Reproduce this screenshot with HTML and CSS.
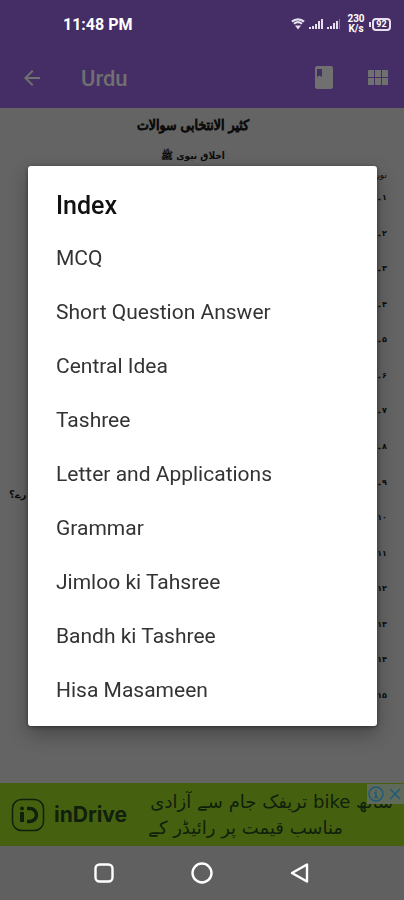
FILE: index.html
```
<!DOCTYPE html>
<html lang="en">
<head>
    <meta charset="UTF-8">
    <meta name="viewport" content="width=device-width, initial-scale=1.0">
    <title>Urdu</title>
    <link rel="stylesheet" href="styles.css">
</head>
<body>
    <div class="screen">
        <div class="status-bar">
            <span class="clock">11:48 PM</span>
            <div class="status-icons">
                <svg width="14" height="12" viewBox="0 0 14 12" fill="none" stroke="#e6e0ee">
                    <path d="M1 3.600C4.400.600 9.600.600 13 3.600" stroke-width="2.400"/>
                    <path d="M3 5.800c2.400-2 5.600-2 8 0" stroke-width="2"/>
                    <path d="M4 7.400h6L7 11.400z" fill="#e6e0ee" stroke="none"/>
                </svg>
                <svg width="32" height="12" viewBox="0 0 32 12" fill="#e6e0ee">
                    <path d="M0 9h2v2H0zM3 8h2v3H3zM6 6h2v5H6zM9 3h2v8H9zM12 1h2v10h-2zM18 9h2v2h-2zM21 8h2v3h-2zM24 5h2v6h-2zM27 3h2v8h-2z"/>
                    <path d="M30 1h1v10h-1z" opacity=".4"/>
                </svg>
                <span class="net-speed">230<br>K/s</span>
                <span class="battery">92</span>
            </div>
        </div>

        <header class="toolbar">
            <button class="icon-button" aria-label="Back">
                <svg width="24" height="24" viewBox="0 0 24 24" fill="currentColor"><path d="M20 11H7.830l5.590-5.590L12 4l-8 8 8 8 1.410-1.410L7.830 13H20z"/></svg>
            </button>
            <h1>Urdu</h1>
            <button class="icon-button" aria-label="Bookmark">
                <svg width="24" height="26" viewBox="0 0 24 26" fill="currentColor"><path fill-rule="evenodd" d="M4 1h14a2 2 0 0 1 2 2v19a2 2 0 0 1-2 2H4a2 2 0 0 1-2-2V3a2 2 0 0 1 2-2zm0 3v8l2.500-1.500L9 12V4z"/></svg>
            </button>
            <button class="icon-button" aria-label="Index">
                <svg width="22" height="18" viewBox="0 0 22 18" fill="currentColor"><path d="M1 1h6v7H1zM8 1h6v7H8zM15 1h6v7h-6zM1 9h6v7H1zM8 9h6v7H8zM15 9h6v7h-6z"/></svg>
            </button>
        </header>

        <main class="document" lang="ur" dir="rtl">
            <h2>کثیر الانتخابی سوالات</h2>
            <h3>اخلاق نبوی ﷺ</h3>
            <p>نور</p>
            <ol class="questions">
                <li>۱۔</li>
                <li>۲۔</li>
                <li>۳۔</li>
                <li>۴۔</li>
                <li>۵۔</li>
                <li>۶۔</li>
                <li>۷۔</li>
                <li>۸۔</li>
                <li>۹۔ <span class="line-end">رے؟</span></li>
                <li>۱۰۔</li>
                <li>۱۱۔</li>
                <li>۱۲۔</li>
                <li>۱۳۔</li>
                <li>۱۴۔</li>
                <li>۱۵۔</li>
            </ol>
        </main>

        <aside class="ad">
            <svg class="ad-logo" width="34" height="34" viewBox="0 0 34 34" fill="none" stroke="currentColor">
                <rect x="1.500" y="1.500" width="31" height="31" rx="9" stroke-width="1.500"/>
                <path d="M11 14v10" stroke-width="4"/>
                <circle cx="11" cy="10.500" r="2" fill="currentColor" stroke="none"/>
                <path d="M16 10.500h3a6.500 6.500 0 0 1 0 13h-3" stroke-width="3.500"/>
            </svg>
            <strong class="ad-name">inDrive</strong>
            <p class="ad-text" lang="ur" dir="rtl">ساتھ bike تریفک جام سے آزادی<br><span class="ad-second">مناسب قیمت پر رائیڈر کے</span></p>
            <div class="ad-choices">
                <button aria-label="Ad information">
                    <svg width="16" height="16" viewBox="0 0 16 16" fill="none" stroke="currentColor" stroke-width="1.500"><circle cx="8" cy="8" r="7"/><path d="M6 7h2v4M6 11.500h4M8 4v1.500"/></svg>
                </button>
                <button aria-label="Close ad">
                    <svg width="16" height="16" viewBox="0 0 16 16" fill="none" stroke="currentColor" stroke-width="1.500"><path d="M3 3l10 10M13 3L3 13"/></svg>
                </button>
            </div>
        </aside>

        <nav class="nav-bar">
            <button aria-label="Recent apps">
                <svg width="22" height="22" viewBox="0 0 22 22" fill="none" stroke="currentColor" stroke-width="2.400"><rect x="2.500" y="2.500" width="17" height="17" rx="4"/></svg>
            </button>
            <button aria-label="Home">
                <svg width="22" height="22" viewBox="0 0 22 22" fill="none" stroke="currentColor" stroke-width="2.400"><circle cx="11" cy="11" r="9.500"/></svg>
            </button>
            <button aria-label="Go back">
                <svg width="22" height="22" viewBox="0 0 22 22" fill="none" stroke="currentColor" stroke-width="2.400" stroke-linejoin="round"><path d="M3 11L18 2.500v17z"/></svg>
            </button>
        </nav>
    </div>

    <div class="overlay">
        <div class="dialog" role="dialog" aria-labelledby="dialogTitle">
            <h2 id="dialogTitle">Index</h2>
            <ul>
                <li><button>MCQ</button></li>
                <li><button>Short Question Answer</button></li>
                <li><button>Central Idea</button></li>
                <li><button>Tashree</button></li>
                <li><button>Letter and Applications</button></li>
                <li><button>Grammar</button></li>
                <li><button>Jimloo ki Tahsree</button></li>
                <li><button>Bandh ki Tashree</button></li>
                <li><button>Hisa Masameen</button></li>
            </ul>
        </div>
    </div>
</body>
</html>
```
FILE: styles.css
```
:root {
    --purple: #452e66;
    --page: #646464;
    --dim-icon: #707070;
    --ad-green: #45610f;
    --ink: #0c0c0c;
}

* {
    box-sizing: border-box;
}

body {
    margin: 0;
    font-family: Roboto, sans-serif;
    background: var(--page);
}

h1, h2, h3, p, ul, ol {
    margin: 0;
    padding: 0;
}

button {
    border: 0;
    padding: 0;
    background: none;
    font: inherit;
    color: inherit;
}

svg {
    display: block;
}

.screen {
    display: flex;
    flex-direction: column;
    min-height: 100vh;
}

.status-bar {
    display: flex;
    align-items: center;
    justify-content: space-between;
    height: 48px;
    padding: 0 13px 0 63px;
    background: var(--purple);
    color: #fff;
}

.clock {
    font-size: 16px;
    font-weight: 700;
}

.status-icons {
    display: flex;
    align-items: center;
    gap: 4px;
}

.net-speed {
    width: 18px;
    margin-left: 2px;
    font-size: 10px;
    font-weight: 700;
    line-height: 10px;
    text-align: center;
}

.battery {
    position: relative;
    width: 19px;
    height: 13px;
    margin-left: 3px;
    border: 2px solid #e6e0ee;
    border-radius: 4px;
    font-size: 9px;
    font-weight: 700;
    line-height: 9px;
    text-align: center;
}

.battery::before {
    content: "";
    position: absolute;
    top: 2px;
    left: -5px;
    width: 2px;
    height: 5px;
    background: #e6e0ee;
}

.toolbar {
    display: flex;
    align-items: center;
    height: 60px;
    padding: 0 15px 0 20px;
    background: var(--purple);
    color: var(--dim-icon);
}

.toolbar h1 {
    flex: 1;
    margin-left: 37px;
    font-size: 22px;
    font-weight: 500;
}

.icon-button + .icon-button {
    margin-left: 30px;
}

.document {
    flex: 1;
    display: flex;
    flex-direction: column;
    padding: 0 17px 70px 9px;
    font-family: "DejaVu Sans", sans-serif;
    color: var(--ink);
}

.document h2,
.document h3 {
    padding-right: 10px;
    font-family: "DejaVu Sans Condensed", "DejaVu Sans", sans-serif;
    text-align: center;
}

.document h2 {
    font-size: 14px;
    font-weight: 400;
    line-height: 34px;
    -webkit-text-stroke: 1px var(--ink);
}

.document h3 {
    font-size: 10px;
    line-height: 28px;
}

.document p {
    font-size: 9px;
    line-height: 10px;
}

.questions {
    flex: 1;
    display: grid;
    grid-auto-rows: 1fr;
    list-style: none;
}

.questions li {
    display: flex;
    align-items: center;
    justify-content: space-between;
    font-size: 8px;
    font-weight: 700;
}

.line-end {
    align-self: flex-end;
    font-size: 10px;
}

.ad {
    position: relative;
    display: flex;
    align-items: center;
    height: 63px;
    padding: 0 11px;
    background: var(--ad-green);
    color: #10200c;
}

.ad-name {
    margin-left: 9px;
    font-family: Inter, sans-serif;
    font-size: 21px;
}

.ad-text {
    flex: 1;
    font-family: "DejaVu Sans", sans-serif;
    font-size: 18px;
    line-height: 26px;
    white-space: nowrap;
}

.ad-second {
    padding-right: 50px;
}

.ad-choices {
    position: absolute;
    top: 1px;
    right: 0;
    display: flex;
    gap: 3px;
    padding: 2px 1px;
    background: #5f6a5a;
    color: #1f5a76;
}

.nav-bar {
    display: flex;
    align-items: center;
    justify-content: center;
    gap: 76px;
    height: 54px;
    background: #606060;
    color: #fff;
}

.overlay {
    position: fixed;
    inset: 0;
    display: flex;
    align-items: center;
    justify-content: center;
    padding: 0 27px 8px 28px;
}

.dialog {
    width: 100%;
    padding: 26px 0 9px;
    border-radius: 3px;
    background: #fff;
    box-shadow: 0 8px 20px rgba(0, 0, 0, 0.3), 0 1px 4px rgba(0, 0, 0, 0.4);
    color: #111;
}

.dialog h2 {
    padding: 0 28px 11px;
    font-size: 25px;
    font-weight: 500;
    line-height: 28px;
}

.dialog ul {
    list-style: none;
}

.dialog li button {
    width: 100%;
    height: 54px;
    padding: 0 28px;
    font-size: 21px;
    text-align: left;
    color: #333;
}
```
